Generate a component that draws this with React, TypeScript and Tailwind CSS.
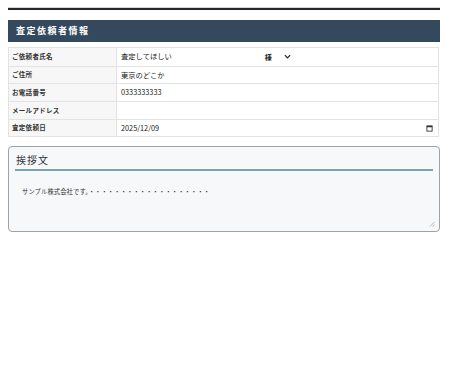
import React from "react"

const font = { fontFamily: '"Noto Sans CJK JP", "Noto Sans", sans-serif' }

const rows = [
  { label: "ご依頼者氏名", value: "査定してほしい", kind: "name" },
  { label: "ご住所", value: "東京のどこか" },
  { label: "お電話番号", value: "0333333333" },
  { label: "メールアドレス", value: "" },
  { label: "査定依頼日", value: "2025/12/09", kind: "date" },
]

export default function App() {
  return (
    <div className="w-[460px] h-[380px] bg-white pt-[7px] pl-2" style={font}>
      <div className="w-[432px]">
        {/* top rule */}
        <div className="border-t border-[#d6d6d6]" />
        <div className="h-[2px] bg-[#23272b]" />

        {/* section header */}
        <div className="mt-[10px] h-[22px] bg-[#35495e] flex items-center pl-2 text-white text-[9px] font-bold tracking-[1.5px]">
          査定依頼者情報
        </div>

        {/* info table */}
        <div className="mt-[5px] border border-[#e3e3e3] w-[431px]">
          {rows.map((r, i) => (
            <div
              key={r.label}
              className={`flex h-[17.7px] ${i > 0 ? "border-t border-[#e3e3e3]" : ""}`}
            >
              <div className="w-[108px] shrink-0 bg-[#f7f7f7] border-r border-[#e3e3e3] flex items-center pl-[3px] text-[6.5px] font-bold text-[#333] tracking-[0.3px]">
                {r.label}
              </div>
              <div className="flex-1 flex items-center pl-[4px] pr-[5px] text-[7.3px] text-[#222]">
                <span>{r.value}</span>
                {r.kind === "name" && (
                  <div className="flex items-center ml-[93px]">
                    <span className="text-[7px] font-bold">様</span>
                    <svg width="7" height="5" viewBox="0 0 8 5" className="ml-[12px]">
                      <path d="M1 1l3 3 3-3" stroke="#222" strokeWidth="1.4" fill="none" />
                    </svg>
                  </div>
                )}
                {r.kind === "date" && (
                  <svg width="7" height="7" viewBox="0 0 8 8" className="ml-auto">
                    <rect x="1" y="1" width="6" height="6" fill="none" stroke="#333" strokeWidth="1" />
                    <rect x="1" y="1" width="6" height="1.6" fill="#333" />
                  </svg>
                )}
              </div>
            </div>
          ))}
        </div>

        {/* greeting box */}
        <div className="mt-[9px] h-[86px] border-[1.5px] border-[#9ea3a6] rounded-[4px] bg-[#f6f8f9] relative px-[6px] pt-[5px]">
          <div className="text-[10px] text-[#333] tracking-[1px] pl-[1px] pb-[2px] border-b-2 border-[#78a4ab]">
            挨拶文
          </div>
          <div className="mt-[16px] pl-[7px] text-[6.3px] text-[#333] tracking-[0.1px]">
            サンプル株式会社です。・・・・・・・・・・・・・・・・・・・
          </div>
          <svg width="6" height="6" viewBox="0 0 6 6" className="absolute right-[4px] bottom-[4px]">
            <path d="M5.5 1L1 5.5M5.5 3.5L3.5 5.5" stroke="#aaa" strokeWidth="0.8" />
          </svg>
        </div>
      </div>
    </div>
  )
}
